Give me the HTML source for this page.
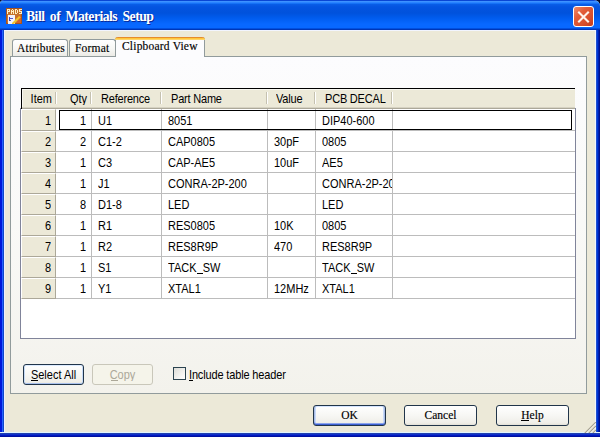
<!DOCTYPE html>
<html><head><meta charset="utf-8">
<style>
*{margin:0;padding:0;box-sizing:border-box}
html,body{width:600px;height:437px;overflow:hidden;background:#02082A}
.a{position:absolute}
.sans{font-family:"Liberation Sans",sans-serif;font-size:11px;color:#000}
.serif{font-family:"Liberation Serif",serif;color:#000}
#win{position:absolute;left:0;top:0;width:600px;height:437px;background:#ECE9D8;border-radius:4px 6px 0 0;overflow:hidden}
#title{left:0;top:0;width:600px;height:30px;
 background:linear-gradient(to bottom,#0A46D4 0px,#0A46D4 1px,#3D92FF 1px,#3D92FF 2px,#2B84FF 2px,#2B84FF 3px,#1672F6 3px,#1672F6 4px,#0A5EE8 4px,#0454E0 7px,#0052DC 13px,#005CEE 18px,#0868FF 24px,#0868FF 28px,#0050E0 28px,#0050E0 29px,#0036B6 29px,#0036B6 30px)}
#lb{left:0;top:30px;width:5px;height:407px;background:linear-gradient(to right,#0019DA 0,#0019DA 2px,#2563FF 2px,#2563FF 3px,#1048C8 3px,#1048C8 4px,#EEF0FF 4px,#EEF0FF 5px)}
#rb{left:595px;top:30px;width:5px;height:407px;background:linear-gradient(to right,#F0F4FF 0,#F0F4FF 1px,#2050D0 1px,#2050D0 2px,#0038D8 2px,#0038D8 3px,#0020B0 3px,#0020B0 4px,#001090 4px)}
#bb{left:0;top:432px;width:600px;height:5px;background:linear-gradient(to bottom,#E0F4FF 0,#E0F4FF 1px,#2040B0 1px,#2040B0 2px,#1030C8 2px,#1030C8 3px,#0018C0 3px,#0018C0 4px,#0010A0 4px)}
#tl{left:4px;top:30px;width:592px;height:1px;background:#F2F5FF}
#ttext{left:26px;top:9px;word-spacing:2.5px;letter-spacing:-0.55px;font-family:"Liberation Serif",serif;font-weight:bold;font-size:13.75px;color:#fff;line-height:16px;white-space:nowrap;text-shadow:1px 1px 0 #0A2A9A}
#close{left:573px;top:6px;width:21px;height:21px;border:1px solid #fff;border-radius:3px;background:linear-gradient(135deg,#EE8A6A 0%,#E25C38 35%,#D84E2C 70%,#C43C1C 100%)}
#panel{left:10px;top:56px;width:577px;height:338px;border:1px solid #919B9C;background:linear-gradient(to bottom,#FCFCFE 0%,#F9F9F7 50%,#F3F2EC 100%)}
.tab{border:1px solid #919B9C;border-bottom:none;border-radius:3px 3px 0 0;background:linear-gradient(to bottom,#FFFFFF 0%,#F6F6F3 60%,#ECEBE6 100%);font-family:"Liberation Serif",serif;font-size:11.5px;white-space:nowrap;color:#000;letter-spacing:0.2px;-webkit-text-stroke:0.15px #000}
#grid{left:21px;top:88px;width:555px;height:251px;border:1px solid #7F9DB9;background:#fff}
#hdr{left:21px;top:88px;width:553px;height:21px;background:#ECE9D8;border-top:1px solid #000;border-left:1px solid #000}
.btn{border:1px solid #21354A;border-radius:3px;background:linear-gradient(to bottom,#FFFFFF 0%,#F7F7F4 50%,#EFEEE8 90%,#E2DFD6 100%)}
.lbl{line-height:13px;white-space:nowrap;transform:scaleY(1.12);transform-origin:0 100%}
.slbl{-webkit-text-stroke:0.15px #000;font-size:11.5px;line-height:13px;white-space:nowrap;transform:scaleY(1.12);transform-origin:0 100%}
</style></head><body>
<div id="win">
 <div id="title" class="a"></div>
 <div id="lb" class="a"></div>
 <div id="rb" class="a"></div>
 <div id="bb" class="a"></div>
 <div id="tl" class="a"></div>
 <!-- icon -->
 <svg class="a" style="left:6px;top:8px" width="16" height="16" viewBox="0 0 16 16" shape-rendering="crispEdges">
  <rect x="0" y="0" width="16" height="16" fill="#A8541C"/>
  <rect x="1" y="1" width="14" height="14" fill="#C6732C"/>
  <g fill="#FFF0C4">
   <rect x="1" y="1" width="3" height="1"/><rect x="1" y="2" width="1" height="4"/><rect x="3" y="2" width="1" height="1"/><rect x="2" y="3" width="2" height="1"/>
   <rect x="6" y="1" width="1" height="1"/><rect x="5" y="2" width="1" height="4"/><rect x="7" y="2" width="1" height="4"/><rect x="6" y="3" width="1" height="1"/>
   <rect x="9" y="1" width="2" height="1"/><rect x="9" y="2" width="1" height="3"/><rect x="11" y="2" width="1" height="3"/><rect x="9" y="5" width="2" height="1"/>
   <rect x="13" y="1" width="3" height="1"/><rect x="13" y="2" width="1" height="1"/><rect x="13" y="3" width="3" height="1"/><rect x="15" y="4" width="1" height="1"/><rect x="13" y="5" width="3" height="1"/>
  </g>
  <rect x="2" y="7" width="7" height="9" fill="#F2F2FC"/>
  <rect x="3" y="9" width="1" height="4" fill="#4444B8"/>
  <rect x="4" y="10" width="3" height="1" fill="#5A5AC8"/>
  <rect x="4" y="12" width="1" height="1" fill="#5A5AC8"/>
  <rect x="11" y="8" width="4" height="7" fill="#D4622A"/>
  <polygon points="6,15 13,8 15,8 15,9 8,16 6,16" fill="#F2C42E" shape-rendering="auto"/>
  <polygon points="13,8 15,8 15,9" fill="#E04A20" shape-rendering="auto"/>
 </svg>
 <div id="ttext" class="a">Bill of Materials Setup</div>
 <div id="close" class="a">
  <svg class="a" style="left:3px;top:4px" width="13" height="12" viewBox="0 0 13 12">
   <path d="M2 1.5 L11 10.5 M11 1.5 L2 10.5" stroke="#FFF4EC" stroke-width="2.1" stroke-linecap="square"/>
  </svg>
 </div>

 <!-- tab panel -->
 <div id="panel" class="a"></div>
 <div class="a tab" style="left:12px;top:39px;width:56px;height:17px"><span class="a" style="left:4px;top:1px;line-height:14px">Attributes</span></div>
 <div class="a tab" style="left:69px;top:39px;width:47px;height:17px"><span class="a" style="left:5px;top:1px;line-height:14px">Format</span></div>
 <div class="a tab" style="left:115px;top:37px;width:90px;height:20px;background:#FCFCFE;border-top:none;border-color:#919B9C">
   <div class="a" style="left:-1px;top:0;width:90px;height:3px;border-radius:3px 3px 0 0;background:linear-gradient(to bottom,#E68B2C 0,#E68B2C 1px,#FFC73C 1px,#FFC73C 2px,#FFD46A 2px)"></div>
   <span class="a" style="left:6px;top:2px;line-height:14px">Clipboard View</span></div>

 <!-- grid -->
  <!--GB-->
<div class="a" style="left:20px;top:108px;width:556px;height:231px;border:1px solid #80849A;border-top:none;background:#fff"></div>
<div class="a" style="left:21px;top:88px;width:554px;height:21px;background:#ECE9D8;border-top:1px solid #000;border-left:1px solid #000"></div>
<div class="a" style="left:22px;top:89px;width:552px;height:1px;background:#F8F7F0"></div>
<div class="a" style="left:22px;top:89px;width:1px;height:19px;background:#F8F7F0"></div>
<div class="a" style="left:55px;top:92px;width:1px;height:12px;background:#C5C1B0"></div>
<div class="a" style="left:56px;top:92px;width:1px;height:12px;background:#FFFFFF"></div>
<div class="a" style="left:90px;top:92px;width:1px;height:12px;background:#C5C1B0"></div>
<div class="a" style="left:91px;top:92px;width:1px;height:12px;background:#FFFFFF"></div>
<div class="a" style="left:160px;top:92px;width:1px;height:12px;background:#C5C1B0"></div>
<div class="a" style="left:161px;top:92px;width:1px;height:12px;background:#FFFFFF"></div>
<div class="a" style="left:266px;top:92px;width:1px;height:12px;background:#C5C1B0"></div>
<div class="a" style="left:267px;top:92px;width:1px;height:12px;background:#FFFFFF"></div>
<div class="a" style="left:314px;top:92px;width:1px;height:12px;background:#C5C1B0"></div>
<div class="a" style="left:315px;top:92px;width:1px;height:12px;background:#FFFFFF"></div>
<div class="a" style="left:391px;top:92px;width:1px;height:12px;background:#C5C1B0"></div>
<div class="a" style="left:392px;top:92px;width:1px;height:12px;background:#FFFFFF"></div>
<div class="a" style="left:22px;top:107px;width:553px;height:1px;background:#D6D2C2"></div>
<div class="a" style="left:22px;top:108px;width:553px;height:1px;background:#ACA899"></div>
<div class="a sans" style="left:-8px;width:60px;text-align:right;top:93px;line-height:13px;white-space:nowrap;transform:scaleY(1.12);transform-origin:0 100%;">Item</div>
<div class="a sans" style="left:27px;width:60px;text-align:right;top:93px;line-height:13px;white-space:nowrap;transform:scaleY(1.12);transform-origin:0 100%;">Qty</div>
<div class="a sans" style="left:101px;top:93px;line-height:13px;white-space:nowrap;letter-spacing:-0.2px;transform:scaleY(1.12);transform-origin:0 100%;">Reference</div>
<div class="a sans" style="left:171px;top:93px;line-height:13px;white-space:nowrap;letter-spacing:-0.2px;transform:scaleY(1.12);transform-origin:0 100%;">Part Name</div>
<div class="a sans" style="left:276px;top:93px;line-height:13px;white-space:nowrap;letter-spacing:-0.2px;transform:scaleY(1.12);transform-origin:0 100%;">Value</div>
<div class="a sans" style="left:325px;top:93px;line-height:13px;white-space:nowrap;letter-spacing:-0.2px;transform:scaleY(1.12);transform-origin:0 100%;">PCB DECAL</div>
<div class="a" style="left:21px;top:109px;width:35px;height:22px;background:#ECE9D8;border-top:1px solid #FFFFFF;border-left:1px solid #FFFFFF;border-bottom:1px solid #ACA899;border-right:1px solid #ACA899"></div>
<div class="a" style="left:56px;top:130px;width:519px;height:1px;background:#BCBCBC"></div>
<div class="a sans" style="left:0px;width:51px;text-align:right;top:115px;line-height:13px;transform:scaleY(1.12);transform-origin:0 100%;">1</div>
<div class="a sans" style="left:60px;width:26px;text-align:right;top:115px;line-height:13px;transform:scaleY(1.12);transform-origin:0 100%;">1</div>
<div class="a sans" style="left:98px;top:115px;line-height:13px;white-space:nowrap;transform:scaleY(1.12);transform-origin:0 100%;">U1</div>
<div class="a sans" style="left:168px;top:115px;line-height:13px;white-space:nowrap;transform:scaleY(1.12);transform-origin:0 100%;">8051</div>
<div class="a sans" style="left:274px;top:115px;line-height:13px;white-space:nowrap;transform:scaleY(1.12);transform-origin:0 100%;"></div>
<div class="a" style="left:316px;top:113px;width:76px;height:17px;overflow:hidden"><div class="a sans" style="left:6px;top:2px;line-height:13px;white-space:nowrap;transform:scaleY(1.12);transform-origin:0 100%;">DIP40-600</div></div>
<div class="a" style="left:21px;top:131px;width:35px;height:21px;background:#ECE9D8;border-top:1px solid #FFFFFF;border-left:1px solid #FFFFFF;border-bottom:1px solid #ACA899;border-right:1px solid #ACA899"></div>
<div class="a" style="left:56px;top:151px;width:519px;height:1px;background:#BCBCBC"></div>
<div class="a sans" style="left:0px;width:51px;text-align:right;top:136px;line-height:13px;transform:scaleY(1.12);transform-origin:0 100%;">2</div>
<div class="a sans" style="left:60px;width:26px;text-align:right;top:136px;line-height:13px;transform:scaleY(1.12);transform-origin:0 100%;">2</div>
<div class="a sans" style="left:98px;top:136px;line-height:13px;white-space:nowrap;transform:scaleY(1.12);transform-origin:0 100%;">C1-2</div>
<div class="a sans" style="left:168px;top:136px;line-height:13px;white-space:nowrap;transform:scaleY(1.12);transform-origin:0 100%;">CAP0805</div>
<div class="a sans" style="left:274px;top:136px;line-height:13px;white-space:nowrap;transform:scaleY(1.12);transform-origin:0 100%;">30pF</div>
<div class="a" style="left:316px;top:134px;width:76px;height:17px;overflow:hidden"><div class="a sans" style="left:6px;top:2px;line-height:13px;white-space:nowrap;transform:scaleY(1.12);transform-origin:0 100%;">0805</div></div>
<div class="a" style="left:21px;top:152px;width:35px;height:21px;background:#ECE9D8;border-top:1px solid #FFFFFF;border-left:1px solid #FFFFFF;border-bottom:1px solid #ACA899;border-right:1px solid #ACA899"></div>
<div class="a" style="left:56px;top:172px;width:519px;height:1px;background:#BCBCBC"></div>
<div class="a sans" style="left:0px;width:51px;text-align:right;top:157px;line-height:13px;transform:scaleY(1.12);transform-origin:0 100%;">3</div>
<div class="a sans" style="left:60px;width:26px;text-align:right;top:157px;line-height:13px;transform:scaleY(1.12);transform-origin:0 100%;">1</div>
<div class="a sans" style="left:98px;top:157px;line-height:13px;white-space:nowrap;transform:scaleY(1.12);transform-origin:0 100%;">C3</div>
<div class="a sans" style="left:168px;top:157px;line-height:13px;white-space:nowrap;transform:scaleY(1.12);transform-origin:0 100%;">CAP-AE5</div>
<div class="a sans" style="left:274px;top:157px;line-height:13px;white-space:nowrap;transform:scaleY(1.12);transform-origin:0 100%;">10uF</div>
<div class="a" style="left:316px;top:155px;width:76px;height:17px;overflow:hidden"><div class="a sans" style="left:6px;top:2px;line-height:13px;white-space:nowrap;transform:scaleY(1.12);transform-origin:0 100%;">AE5</div></div>
<div class="a" style="left:21px;top:173px;width:35px;height:21px;background:#ECE9D8;border-top:1px solid #FFFFFF;border-left:1px solid #FFFFFF;border-bottom:1px solid #ACA899;border-right:1px solid #ACA899"></div>
<div class="a" style="left:56px;top:193px;width:519px;height:1px;background:#BCBCBC"></div>
<div class="a sans" style="left:0px;width:51px;text-align:right;top:178px;line-height:13px;transform:scaleY(1.12);transform-origin:0 100%;">4</div>
<div class="a sans" style="left:60px;width:26px;text-align:right;top:178px;line-height:13px;transform:scaleY(1.12);transform-origin:0 100%;">1</div>
<div class="a sans" style="left:98px;top:178px;line-height:13px;white-space:nowrap;transform:scaleY(1.12);transform-origin:0 100%;">J1</div>
<div class="a sans" style="left:168px;top:178px;line-height:13px;white-space:nowrap;transform:scaleY(1.12);transform-origin:0 100%;">CONRA-2P-200</div>
<div class="a sans" style="left:274px;top:178px;line-height:13px;white-space:nowrap;transform:scaleY(1.12);transform-origin:0 100%;"></div>
<div class="a" style="left:316px;top:176px;width:76px;height:17px;overflow:hidden"><div class="a sans" style="left:6px;top:2px;line-height:13px;white-space:nowrap;transform:scaleY(1.12);transform-origin:0 100%;">CONRA-2P-200</div></div>
<div class="a" style="left:21px;top:194px;width:35px;height:21px;background:#ECE9D8;border-top:1px solid #FFFFFF;border-left:1px solid #FFFFFF;border-bottom:1px solid #ACA899;border-right:1px solid #ACA899"></div>
<div class="a" style="left:56px;top:214px;width:519px;height:1px;background:#BCBCBC"></div>
<div class="a sans" style="left:0px;width:51px;text-align:right;top:199px;line-height:13px;transform:scaleY(1.12);transform-origin:0 100%;">5</div>
<div class="a sans" style="left:60px;width:26px;text-align:right;top:199px;line-height:13px;transform:scaleY(1.12);transform-origin:0 100%;">8</div>
<div class="a sans" style="left:98px;top:199px;line-height:13px;white-space:nowrap;transform:scaleY(1.12);transform-origin:0 100%;">D1-8</div>
<div class="a sans" style="left:168px;top:199px;line-height:13px;white-space:nowrap;transform:scaleY(1.12);transform-origin:0 100%;">LED</div>
<div class="a sans" style="left:274px;top:199px;line-height:13px;white-space:nowrap;transform:scaleY(1.12);transform-origin:0 100%;"></div>
<div class="a" style="left:316px;top:197px;width:76px;height:17px;overflow:hidden"><div class="a sans" style="left:6px;top:2px;line-height:13px;white-space:nowrap;transform:scaleY(1.12);transform-origin:0 100%;">LED</div></div>
<div class="a" style="left:21px;top:215px;width:35px;height:21px;background:#ECE9D8;border-top:1px solid #FFFFFF;border-left:1px solid #FFFFFF;border-bottom:1px solid #ACA899;border-right:1px solid #ACA899"></div>
<div class="a" style="left:56px;top:235px;width:519px;height:1px;background:#BCBCBC"></div>
<div class="a sans" style="left:0px;width:51px;text-align:right;top:220px;line-height:13px;transform:scaleY(1.12);transform-origin:0 100%;">6</div>
<div class="a sans" style="left:60px;width:26px;text-align:right;top:220px;line-height:13px;transform:scaleY(1.12);transform-origin:0 100%;">1</div>
<div class="a sans" style="left:98px;top:220px;line-height:13px;white-space:nowrap;transform:scaleY(1.12);transform-origin:0 100%;">R1</div>
<div class="a sans" style="left:168px;top:220px;line-height:13px;white-space:nowrap;transform:scaleY(1.12);transform-origin:0 100%;">RES0805</div>
<div class="a sans" style="left:274px;top:220px;line-height:13px;white-space:nowrap;transform:scaleY(1.12);transform-origin:0 100%;">10K</div>
<div class="a" style="left:316px;top:218px;width:76px;height:17px;overflow:hidden"><div class="a sans" style="left:6px;top:2px;line-height:13px;white-space:nowrap;transform:scaleY(1.12);transform-origin:0 100%;">0805</div></div>
<div class="a" style="left:21px;top:236px;width:35px;height:21px;background:#ECE9D8;border-top:1px solid #FFFFFF;border-left:1px solid #FFFFFF;border-bottom:1px solid #ACA899;border-right:1px solid #ACA899"></div>
<div class="a" style="left:56px;top:256px;width:519px;height:1px;background:#BCBCBC"></div>
<div class="a sans" style="left:0px;width:51px;text-align:right;top:241px;line-height:13px;transform:scaleY(1.12);transform-origin:0 100%;">7</div>
<div class="a sans" style="left:60px;width:26px;text-align:right;top:241px;line-height:13px;transform:scaleY(1.12);transform-origin:0 100%;">1</div>
<div class="a sans" style="left:98px;top:241px;line-height:13px;white-space:nowrap;transform:scaleY(1.12);transform-origin:0 100%;">R2</div>
<div class="a sans" style="left:168px;top:241px;line-height:13px;white-space:nowrap;transform:scaleY(1.12);transform-origin:0 100%;">RES8R9P</div>
<div class="a sans" style="left:274px;top:241px;line-height:13px;white-space:nowrap;transform:scaleY(1.12);transform-origin:0 100%;">470</div>
<div class="a" style="left:316px;top:239px;width:76px;height:17px;overflow:hidden"><div class="a sans" style="left:6px;top:2px;line-height:13px;white-space:nowrap;transform:scaleY(1.12);transform-origin:0 100%;">RES8R9P</div></div>
<div class="a" style="left:21px;top:257px;width:35px;height:21px;background:#ECE9D8;border-top:1px solid #FFFFFF;border-left:1px solid #FFFFFF;border-bottom:1px solid #ACA899;border-right:1px solid #ACA899"></div>
<div class="a" style="left:56px;top:277px;width:519px;height:1px;background:#BCBCBC"></div>
<div class="a sans" style="left:0px;width:51px;text-align:right;top:262px;line-height:13px;transform:scaleY(1.12);transform-origin:0 100%;">8</div>
<div class="a sans" style="left:60px;width:26px;text-align:right;top:262px;line-height:13px;transform:scaleY(1.12);transform-origin:0 100%;">1</div>
<div class="a sans" style="left:98px;top:262px;line-height:13px;white-space:nowrap;transform:scaleY(1.12);transform-origin:0 100%;">S1</div>
<div class="a sans" style="left:168px;top:262px;line-height:13px;white-space:nowrap;transform:scaleY(1.12);transform-origin:0 100%;">TACK_SW</div>
<div class="a sans" style="left:274px;top:262px;line-height:13px;white-space:nowrap;transform:scaleY(1.12);transform-origin:0 100%;"></div>
<div class="a" style="left:316px;top:260px;width:76px;height:17px;overflow:hidden"><div class="a sans" style="left:6px;top:2px;line-height:13px;white-space:nowrap;transform:scaleY(1.12);transform-origin:0 100%;">TACK_SW</div></div>
<div class="a" style="left:21px;top:278px;width:35px;height:21px;background:#ECE9D8;border-top:1px solid #FFFFFF;border-left:1px solid #FFFFFF;border-bottom:1px solid #ACA899;border-right:1px solid #ACA899"></div>
<div class="a" style="left:56px;top:298px;width:519px;height:1px;background:#BCBCBC"></div>
<div class="a sans" style="left:0px;width:51px;text-align:right;top:283px;line-height:13px;transform:scaleY(1.12);transform-origin:0 100%;">9</div>
<div class="a sans" style="left:60px;width:26px;text-align:right;top:283px;line-height:13px;transform:scaleY(1.12);transform-origin:0 100%;">1</div>
<div class="a sans" style="left:98px;top:283px;line-height:13px;white-space:nowrap;transform:scaleY(1.12);transform-origin:0 100%;">Y1</div>
<div class="a sans" style="left:168px;top:283px;line-height:13px;white-space:nowrap;transform:scaleY(1.12);transform-origin:0 100%;">XTAL1</div>
<div class="a sans" style="left:274px;top:283px;line-height:13px;white-space:nowrap;transform:scaleY(1.12);transform-origin:0 100%;">12MHz</div>
<div class="a" style="left:316px;top:281px;width:76px;height:17px;overflow:hidden"><div class="a sans" style="left:6px;top:2px;line-height:13px;white-space:nowrap;transform:scaleY(1.12);transform-origin:0 100%;">XTAL1</div></div>
<div class="a" style="left:197px;top:273px;width:6px;height:1px;background:#000"></div>
<div class="a" style="left:351px;top:273px;width:6px;height:1px;background:#000"></div>
<div class="a" style="left:91px;top:109px;width:1px;height:190px;background:#BCBCBC"></div>
<div class="a" style="left:161px;top:109px;width:1px;height:190px;background:#BCBCBC"></div>
<div class="a" style="left:267px;top:109px;width:1px;height:190px;background:#BCBCBC"></div>
<div class="a" style="left:315px;top:109px;width:1px;height:190px;background:#BCBCBC"></div>
<div class="a" style="left:392px;top:109px;width:1px;height:190px;background:#BCBCBC"></div>
<div class="a" style="left:59px;top:110px;width:513px;height:20px;border:1px solid #000"></div>
<!--/GB-->

 <!-- bottom controls -->
 <div class="a btn" style="left:23px;top:364px;width:61px;height:21px;box-shadow:inset 0 1px 0 #DCEBFF,inset 1px 0 0 #C6DAF6,inset -1px 0 0 #C6DAF6,inset 0 -1px 0 #A8C0EC"></div>
 <div class="a sans lbl" style="left:0;width:107px;text-align:center;top:369px">Select All</div>
 <div class="a" style="left:31px;top:380px;width:7px;height:1px;background:#000"></div>
 <div class="a" style="left:92px;top:364px;width:61px;height:21px;border:1px solid #C9C7BA;border-radius:3px;background:#F5F4EA"></div>
 <div class="a sans lbl" style="left:92px;width:61px;text-align:center;top:369px;color:#ACA899">Copy</div>
 <div class="a" style="left:111px;top:380px;width:7px;height:1px;background:#ACA899"></div>
 <div class="a" style="left:173px;top:367px;width:13px;height:13px;border:1px solid #2B4350;background:linear-gradient(135deg,#DCDCD7 0%,#F2F2EF 60%,#FFFFFF 100%)"></div>
 <div class="a sans lbl" style="left:189px;top:369px;letter-spacing:-0.15px">Include table header</div>
 <div class="a" style="left:189px;top:380px;width:4px;height:1px;background:#000"></div>

 <div class="a btn" style="left:313px;top:405px;width:73px;height:21px;box-shadow:inset 0 -1px 0 #3D5FD0,inset 0 -2px 0 #8AA4EC,inset 1px 0 0 #A8BCE6,inset 2px 0 0 #C8DAF8,inset -1px 0 0 #A8BCE6,inset -2px 0 0 #C8DAF8,inset 0 1px 0 #D4E4FF"></div>
 <div class="a btn" style="left:404px;top:405px;width:73px;height:21px"></div>
 <div class="a btn" style="left:496px;top:405px;width:73px;height:21px"></div>
 <div class="a serif slbl" style="left:313px;width:73px;text-align:center;top:409px">OK</div>
 <div class="a serif slbl" style="left:404px;width:73px;text-align:center;top:409px">Cancel</div>
 <div class="a serif slbl" style="left:496px;width:73px;text-align:center;top:409px">Help</div>
 <div class="a" style="left:521px;top:420px;width:8px;height:1px;background:#000"></div>

 <!-- size grip -->
 <svg class="a" style="left:584px;top:422px" width="12" height="11" viewBox="0 0 12 11">
  <path d="M12 1 L1 12 M12 5 L5 12 M12 9 L9 12" stroke="#FFFFFF" stroke-width="1"/>
  <path d="M12 0 L0 12 M12 4 L4 12 M12 8 L8 12" stroke="#A6A290" stroke-width="1.2"/>
 </svg>
</div>
</body></html>
